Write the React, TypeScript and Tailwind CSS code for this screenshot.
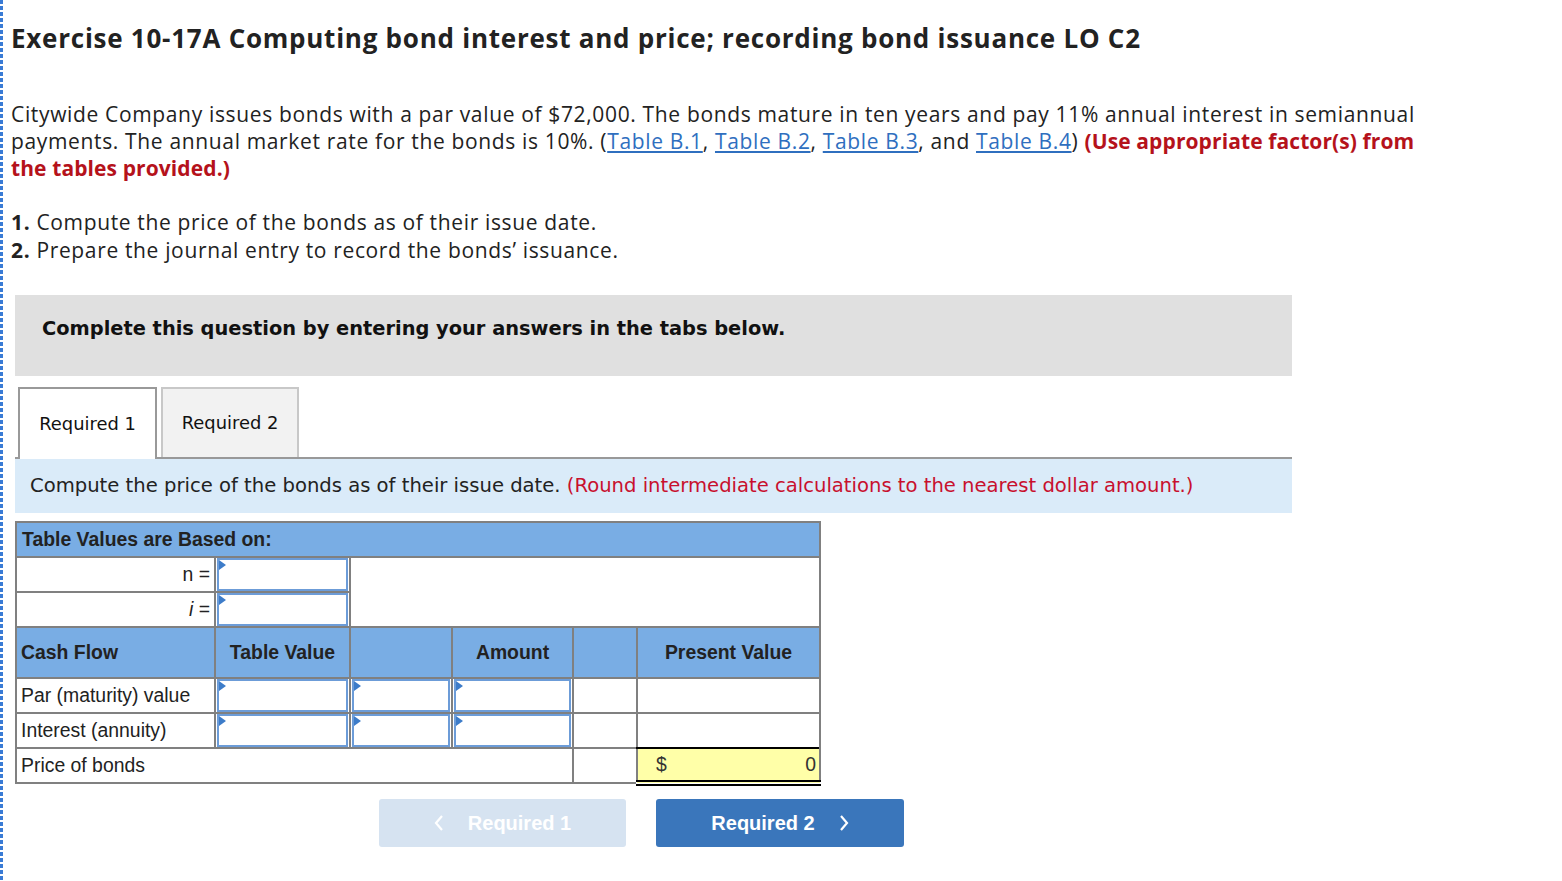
import React from "react";

const PROX = { fontFamily: "'Open Sans', Lato, sans-serif" };
const VERD = { fontFamily: "'DejaVu Sans', Verdana, sans-serif" };
const ARIAL = { fontFamily: "'Liberation Sans', Arial, sans-serif" };

function Tri() {
  return (
    <svg className="absolute left-0 top-0" width="7" height="10" viewBox="0 0 7 10">
      <polygon points="0,0 7,5 0,10" fill="#3d7cc9" />
    </svg>
  );
}

function InputCell() {
  return (
    <td className="p-0 border-2 border-[#808080] h-[35px]">
      <div className="relative h-[33px] mx-[1px] my-0 bg-white border-2 border-[#6c9cd8]">
        <Tri />
      </div>
    </td>
  );
}

export default function App() {
  const cell = "border-2 border-[#808080]";
  return (
    <div className="flex min-h-[881px] w-full bg-white">
      <div className="w-[3px] shrink-0 bg-[repeating-linear-gradient(to_bottom,#3a7bd5_0px,#3a7bd5_4px,transparent_4px,transparent_6px)]" />
      <div className="pl-[8px] flex-1">
        <h1 className="mt-[22px] text-[26px] leading-[32px] font-bold tracking-[0.75px] text-[#222]" style={PROX}>
          Exercise 10-17A Computing bond interest and price; recording bond issuance LO C2
        </h1>
        <p className="mt-[47px] text-[21px] leading-[27px] tracking-[0.65px] text-[#222]" style={PROX}>
          Citywide Company issues bonds with a par value of $72,000. The bonds mature in ten years and pay 11% annual interest in semiannual
          <br />
          payments. The annual market rate for the bonds is 10%. (
          <span className="text-[#2f6fbf] underline">Table B.1</span>,{" "}
          <span className="text-[#2f6fbf] underline">Table B.2</span>,{" "}
          <span className="text-[#2f6fbf] underline">Table B.3</span>, and{" "}
          <span className="text-[#2f6fbf] underline">Table B.4</span>){" "}
          <span className="font-bold tracking-[0.1px] text-[#b5121b]">(Use appropriate factor(s) from</span>
          <br />
          <span className="font-bold tracking-[0.1px] text-[#b5121b]">the tables provided.)</span>
        </p>
        <div className="mt-[26px] text-[21px] leading-[28px] tracking-[0.65px] text-[#222]" style={PROX}>
          <div>
            <span className="font-bold">1.</span> Compute the price of the bonds as of their issue date.
          </div>
          <div>
            <span className="font-bold">2.</span> Prepare the journal entry to record the bonds’ issuance.
          </div>
        </div>

        <div className="ml-[4px] w-[1277px]">
          <div className="mt-[31px] h-[81px] bg-[#e0e0e0] pl-[27px] pt-[22px]">
            <div className="text-[19.4px] leading-[24px] font-bold text-[#111]" style={VERD}>
              Complete this question by entering your answers in the tabs below.
            </div>
          </div>

          <div className="mt-[11px] flex h-[72px]" style={VERD}>
            <div className="w-[3px] border-b-2 border-[#999]" />
            <div className="w-[139px] bg-white border-t-2 border-x-2 border-[#999] flex items-center justify-center text-[17.9px] text-[#111]">
              Required 1
            </div>
            <div className="w-[4px] border-b-2 border-[#999]" />
            <div className="w-[138px] flex flex-col">
              <div className="flex-1 bg-[#f2f2f2] border-t-2 border-x-2 border-[#c8c8c8] flex items-center justify-center text-[17.9px] text-[#111]">
                Required 2
              </div>
              <div className="h-[2px] bg-[#999]" />
            </div>
            <div className="flex-1 border-b-2 border-[#999]" />
          </div>

          <div className="h-[54px] bg-[#daebf9] pl-[15px] flex items-center text-[19.6px] text-[#222]" style={VERD}>
            Compute the price of the bonds as of their issue date.&nbsp;
            <span className="text-[#c8102e]">(Round intermediate calculations to the nearest dollar amount.)</span>
          </div>

          <table className="mt-[8px] border-collapse w-[804px] table-fixed text-[19.4px] text-[#222]" style={ARIAL}>
            <colgroup>
              <col className="w-[199px]" />
              <col className="w-[135px]" />
              <col className="w-[102px]" />
              <col className="w-[121px]" />
              <col className="w-[64px]" />
              <col className="w-[183px]" />
            </colgroup>
            <tbody>
              <tr className="bg-[#79ade4]">
                <td colSpan={6} className={`${cell} h-[35px] px-[5px] font-bold leading-none`}>
                  Table Values are Based on:
                </td>
              </tr>
              <tr>
                <td className={`${cell} h-[35px] text-right pr-[4px]`}>n =</td>
                <InputCell />
                <td colSpan={4} rowSpan={2} className={cell}></td>
              </tr>
              <tr>
                <td className={`${cell} h-[35px] text-right pr-[4px]`}>
                  <i>i</i> =
                </td>
                <InputCell />
              </tr>
              <tr className="bg-[#79ade4] font-bold">
                <td className={`${cell} h-[51px] px-[4px] text-left`}>Cash Flow</td>
                <td className={`${cell} text-center`}>Table Value</td>
                <td className={cell}></td>
                <td className={`${cell} text-center`}>Amount</td>
                <td className={cell}></td>
                <td className={`${cell} text-center`}>Present Value</td>
              </tr>
              <tr>
                <td className={`${cell} h-[35px] px-[4px]`}>Par (maturity) value</td>
                <InputCell />
                <InputCell />
                <InputCell />
                <td className={cell}></td>
                <td className={cell}></td>
              </tr>
              <tr>
                <td className={`${cell} h-[35px] px-[4px]`}>Interest (annuity)</td>
                <InputCell />
                <InputCell />
                <InputCell />
                <td className={cell}></td>
                <td className={cell}></td>
              </tr>
              <tr>
                <td colSpan={4} className={`${cell} h-[35px] px-[4px]`}>Price of bonds</td>
                <td className={cell}></td>
                <td className="border-2 border-double border-t-black border-b-[6px] border-b-black border-l-[#808080] border-r-[#808080] bg-[#ffffa8] h-[35px] p-0">
                  <div className="flex justify-between pl-[18px] pr-[3px] text-[#333]">
                    <span>$</span>
                    <span>0</span>
                  </div>
                </td>
              </tr>
            </tbody>
          </table>

          <div className="mt-[13px] flex gap-[30px] ml-[364px]" style={ARIAL}>
            <button className="w-[247px] h-[48px] rounded-[3px] bg-[#d6e3f1] text-white font-bold text-[20px] flex items-center justify-center">
              <svg width="10" height="16" viewBox="0 0 10 16" className="mr-[24px]">
                <polyline points="8,1 2,8 8,15" fill="none" stroke="white" strokeWidth="2.2" />
              </svg>
              Required 1
            </button>
            <button className="w-[248px] h-[48px] rounded-[3px] bg-[#3a76bb] text-white font-bold text-[20px] flex items-center justify-center">
              Required 2
              <svg width="10" height="16" viewBox="0 0 10 16" className="ml-[24px]">
                <polyline points="2,1 8,8 2,15" fill="none" stroke="white" strokeWidth="2.2" />
              </svg>
            </button>
          </div>
        </div>
      </div>
    </div>
  );
}
